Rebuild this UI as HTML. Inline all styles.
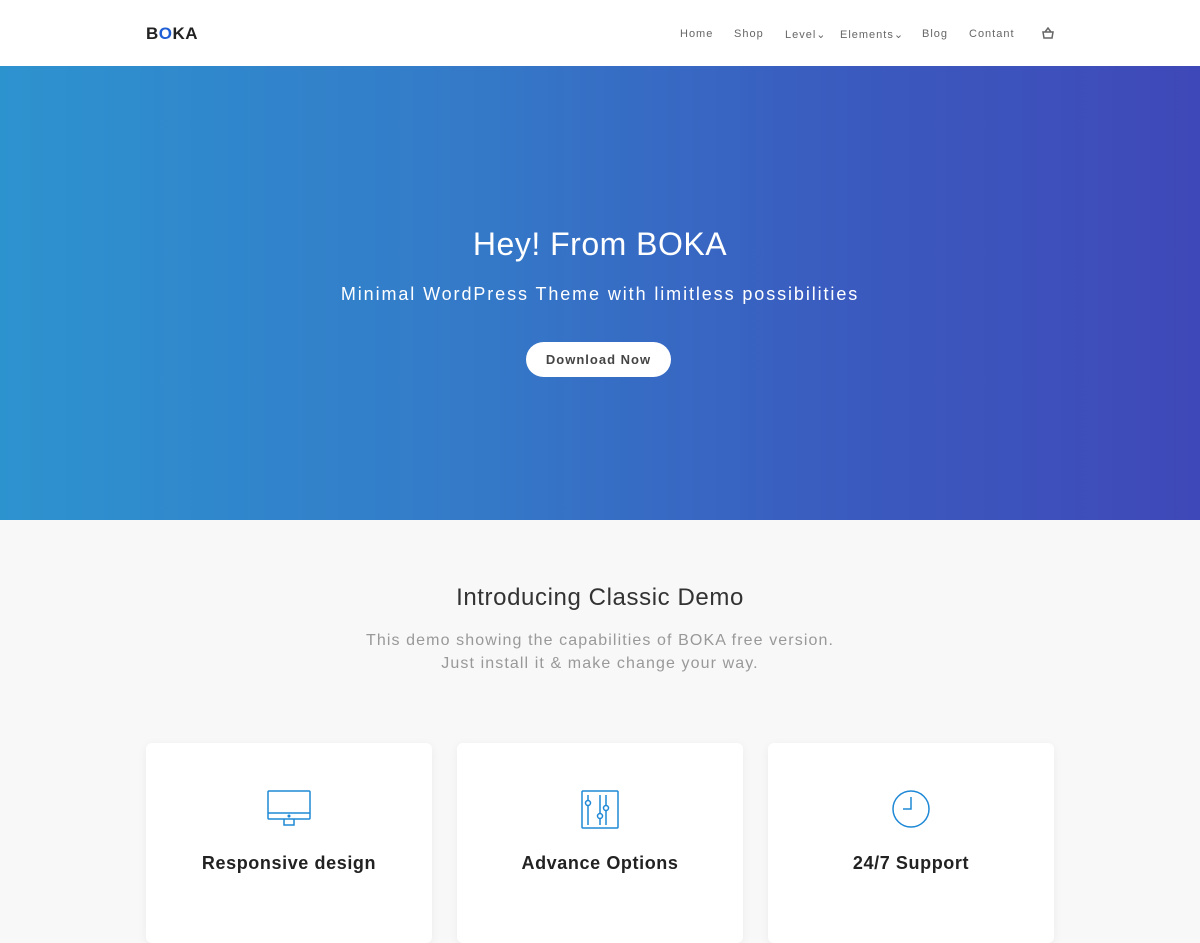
<!DOCTYPE html>
<html><head><meta charset="utf-8"><style>
*{margin:0;padding:0;box-sizing:border-box}
body{width:1200px;height:900px;overflow:hidden;background:#f8f8f8;font-family:"Liberation Sans",sans-serif}
.nav{height:66px;background:#fff;position:relative}
.logo{position:absolute;left:146px;top:24px;font-weight:bold;font-size:17px;color:#222;letter-spacing:0.5px}
.logo span{color:#1f5fd6}
.menu{position:absolute;top:28px;left:680px;font-size:11px;color:#666;letter-spacing:1px}
.menu span{position:absolute;white-space:nowrap}
.hero{height:454px;background:linear-gradient(90deg,#2d93cf 0%,#3479c8 40%,#3a5bbf 70%,#3f48b8 100%);position:relative;color:#fff;text-align:center}
.hero h1{position:absolute;top:160px;width:100%;font-weight:normal;font-size:32px;letter-spacing:0.5px}
.hero p{position:absolute;top:218px;width:100%;font-size:18px;letter-spacing:1.9px}
.btn{position:absolute;left:526px;top:276px;width:145px;height:35px;border-radius:18px;background:#fff;color:#444;font-size:13px;font-weight:bold;line-height:35px;letter-spacing:1px}
.intro{text-align:center}
.intro h2{position:absolute;top:584px;width:1200px;font-weight:normal;font-size:24px;color:#333;letter-spacing:0.6px}
.intro p{position:absolute;top:629px;width:1200px;font-size:16px;color:#999;line-height:23px;letter-spacing:1.1px}
.card{position:absolute;top:743px;width:286px;height:200px;background:#fff;border-radius:6px;box-shadow:0 2px 10px rgba(0,0,0,0.05);text-align:center}
.card svg{position:absolute;left:121px;top:46px}
.card h3{position:absolute;top:110px;width:100%;font-size:18px;color:#222;letter-spacing:0.6px}
</style></head><body>
<div class="nav"><div class="logo">B<span>O</span>KA</div>
<div class="menu"><span style="left:0">Home</span><span style="left:54px">Shop</span><span style="left:105px">Level⌄</span><span style="left:160px">Elements⌄</span><span style="left:242px">Blog</span><span style="left:289px">Contant</span>
<svg style="position:absolute;left:362px;top:-1px" width="12" height="12" viewBox="0 0 12 12"><path d="M1 5h10l-1 6H2z M3 5l3-4 3 4" fill="none" stroke="#666" stroke-width="1.5"/></svg></div></div>
<div class="hero"><h1>Hey! From BOKA</h1><p>Minimal WordPress Theme with limitless possibilities</p><div class="btn">Download Now</div></div>
<div class="intro"><h2>Introducing Classic Demo</h2><p>This demo showing the capabilities of BOKA free version.<br>Just install it &amp; make change your way.</p></div>
<div class="card" style="left:146px"><svg width="44" height="40" viewBox="0 0 44 40" fill="none" stroke="#1e88d6" stroke-width="1.5"><rect x="1" y="2" width="42" height="28" rx="1"/><path d="M1 24h42M17 30v6h10v-6"/><circle cx="22" cy="27" r="0.8" fill="#1e88d6"/></svg><h3>Responsive design</h3></div>
<div class="card" style="left:457px"><svg width="44" height="40" viewBox="0 0 44 40" fill="none" stroke="#1e88d6" stroke-width="1.5"><rect x="4" y="2" width="36" height="37" rx="1"/><path d="M10 6v30M22 6v30M28 6v30"/><circle cx="10" cy="14" r="2.5" fill="#fff"/><circle cx="22" cy="27" r="2.5" fill="#fff"/><circle cx="28" cy="19" r="2.5" fill="#fff"/></svg><h3>Advance Options</h3></div>
<div class="card" style="left:768px"><svg width="44" height="40" viewBox="0 0 44 40" fill="none" stroke="#1e88d6" stroke-width="1.5"><circle cx="22" cy="20" r="18"/><path d="M22 8v12h-8"/></svg><h3>24/7 Support</h3></div>
</body></html>
